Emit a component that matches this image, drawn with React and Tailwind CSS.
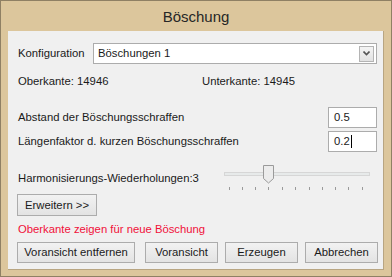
import React from 'react';

const Btn = ({ children, className = '' }) => (
  <div
    className={`h-[21px] flex items-center justify-center border border-[#acacac] bg-gradient-to-b from-[#f2f2f2] to-[#e3e3e3] text-[#1a1a1a] ${className}`}
  >
    {children}
  </div>
);

const ticks = [229, 242, 255, 268, 282, 295, 309, 322, 335, 348, 362];

export default function App() {
  return (
    <div className="w-[392px] h-[277px] bg-[#dcc69c] border border-[#8f8064] flex flex-col font-['Liberation_Sans',Arial,sans-serif] text-[11.3px] leading-[15px] text-[#1a1a1a]">
      <div className="h-[30px] flex items-center justify-center text-[15px] text-[#262626]">Böschung</div>

      <div className="mx-[7px] mb-[6px] flex-1 bg-[#f0f0f0] border-r border-b border-[#b8a582] flex flex-col">
        {/* Konfiguration */}
        <div className="mt-[12px] flex items-center h-[21px]">
          <span className="pl-[10px] w-[85px]">Konfiguration</span>
          <div className="w-[284px] h-[21px] bg-white border border-[#acacac] flex items-center justify-between pl-[4px] pr-[2px]">
            <span>Böschungen 1</span>
            <div className="w-[15px] h-[16px] border border-[#b4b4b4] bg-gradient-to-b from-[#f4f4f4] to-[#e2e2e2] flex items-center justify-center">
              <svg width="7" height="5" viewBox="0 0 7 5">
                <path d="M0.5 0.5 L3.5 3.5 L6.5 0.5" stroke="#555" strokeWidth="1.6" fill="none" />
              </svg>
            </div>
          </div>
        </div>

        {/* Ober / Unterkante */}
        <div className="mt-[10px] flex h-[15px]">
          <span className="pl-[10px] w-[194px]">Oberkante: 14946</span>
          <span>Unterkante: 14945</span>
        </div>

        {/* Abstand */}
        <div className="mt-[18px] flex items-center justify-between h-[21px] pr-[6px]">
          <span className="pl-[10px]">Abstand der Böschungsschraffen</span>
          <div className="w-[49px] h-[21px] bg-white border border-[#acacac] flex items-center pl-[5px]">0.5</div>
        </div>

        {/* Längenfaktor */}
        <div className="mt-[3px] flex items-center justify-between h-[21px] pr-[6px]">
          <span className="pl-[10px]">Längenfaktor d. kurzen Böschungsschraffen</span>
          <div className="w-[49px] h-[21px] bg-white border border-[#acacac] flex items-center pl-[5px]">
            0.2<span className="w-[1px] h-[13px] bg-black ml-[1px]" />
          </div>
        </div>

        {/* Slider */}
        <div className="mt-[13px] flex h-[26px]">
          <span className="pl-[10px] w-[216px] pt-[6px]">Harmonisierungs-Wiederholungen:3</span>
          <div className="relative w-[146px] h-[26px]">
            <div className="absolute left-0 right-0 top-[7px] h-[4px] bg-[#e7eaea] border border-[#d6d6d6]" />
            <svg className="absolute left-[39px] top-0" width="12" height="19" viewBox="0 0 12 19">
              <path d="M0.5 0.5 H10.5 V13.5 L5.5 18 L0.5 13.5 Z" fill="#ececec" stroke="#9a9a9a" />
            </svg>
            {ticks.map((t) => (
              <div key={t} className="absolute top-[22px] w-[1px] h-[3px] bg-[#9a9a9a]" style={{ left: t - 224 }} />
            ))}
          </div>
        </div>

        {/* Erweitern */}
        <div className="mt-[3px] pl-[9px]">
          <Btn className="w-[80px] h-[22px]">Erweitern &gt;&gt;</Btn>
        </div>

        <div className="mt-[6px] pl-[10px] h-[15px] text-[#f0103a]">Oberkante zeigen für neue Böschung</div>

        <div className="mt-[5px] pl-[9px] flex">
          <Btn className="w-[118px]">Voransicht entfernen</Btn>
          <Btn className="w-[73px] ml-[10px]">Voransicht</Btn>
          <Btn className="w-[73px] ml-[7px]">Erzeugen</Btn>
          <Btn className="w-[73px] ml-[7px]">Abbrechen</Btn>
        </div>
      </div>
    </div>
  );
}
